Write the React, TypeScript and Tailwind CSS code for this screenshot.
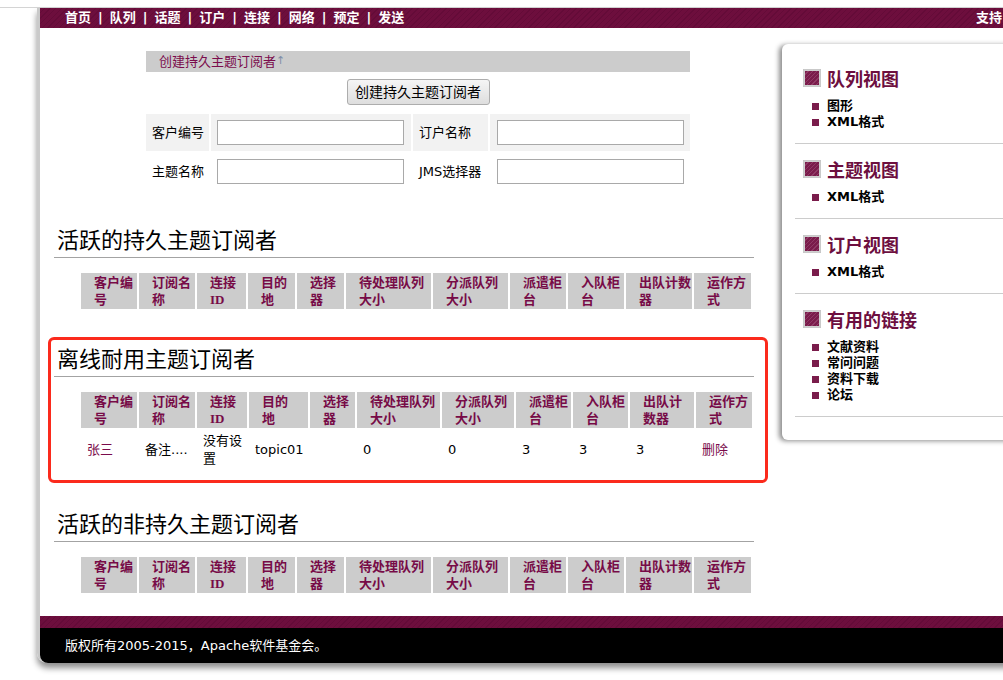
const sans = "font-['DejaVu_Sans','Noto_Sans_CJK_SC',sans-serif]";
const serif = "font-['Liberation_Serif','Noto_Sans_CJK_SC',serif]";

const stripe =
  "bg-[repeating-linear-gradient(135deg,#6d0e3d_0px,#6d0e3d_3px,#640b38_3px,#640b38_4px)]";

const navItems = ["首页", "队列", "话题", "订户", "连接", "网络", "预定", "发送"];

const head1 = [
  ["客户编", "号"],
  ["订阅名", "称"],
  ["连接", "ID"],
  ["目的", "地"],
  ["选择", "器"],
  ["待处理队列", "大小"],
  ["分派队列", "大小"],
  ["派遣柜", "台"],
  ["入队柜", "台"],
  ["出队计数", "器"],
  ["运作方", "式"],
];

const head2 = head1.map((h, i) => (i === 9 ? ["出队计", "数器"] : h));

const cols1 = "grid-cols-[56px_56px_49px_47px_47px_85px_75px_56px_56px_66px_57px]";
const cols2 = "grid-cols-[56px_56px_50px_59px_45px_83px_72px_55px_55px_64px_56px]";

const HeadRow = ({ labels, cols }: { labels: string[][]; cols: string }) => (
  <div className={`grid ${cols} gap-[2px]`}>
    {labels.map(([a, b], i) => (
      <div
        key={i}
        className={`h-[36px] bg-[#cccccc] pl-[13px] py-px text-[13px] leading-[17px] font-bold text-[#770b47] whitespace-nowrap ${serif}`}
      >
        {a}
        <br />
        {b}
      </div>
    ))}
  </div>
);

const SectionTitle = ({ children }: { children: React.ReactNode }) => (
  <h2
    className={`h-[30px] border-b border-[#a3a3a3] pl-[3px] pb-[3px] text-[22px] leading-[26px] text-black ${serif}`}
  >
    {children}
  </h2>
);

const Square = () => (
  <span className="w-[18px] h-[18px] shrink-0 bg-[#cfcfcf] p-[2px] shadow-[inset_0_0_1px_#999]">
    <span className="block w-full h-full bg-[repeating-linear-gradient(135deg,#7a1c4b_0px,#7a1c4b_2px,#8f3a65_2px,#8f3a65_3px)]" />
  </span>
);

const SideSection = ({ title, items }: { title: string; items: string[] }) => (
  <div>
    <div className="flex items-center gap-[6px] h-[24px] pl-[8px]">
      <Square />
      <span className="text-[18px] leading-[22px] font-bold text-[#6d0f3f] font-['Noto_Sans_CJK_SC',sans-serif]">
        {title}
      </span>
    </div>
    <ul className="mt-[8px] pl-[17px]">
      {items.map((t) => (
        <li key={t} className="flex items-center h-[16px] text-[13px] font-bold text-black">
          <span className="w-[7px] h-[7px] bg-[#7a1c4b] mr-[8px]" />
          {t}
        </li>
      ))}
    </ul>
    <div className="mt-[13px] h-px bg-[#cccccc]" />
  </div>
);

export default function App() {
  return (
    <div className={`relative w-[1003px] h-[680px] overflow-hidden bg-white ${sans}`}>
      <div className="h-[7px]" />
      <div className="h-px bg-[#d4d4d4]" />
      <div className="flex">
        <div className="w-[37px] shrink-0" />
        <div className="w-[1120px] shrink-0 border-l-[3px] border-[#c9c9c9] rounded-bl-[10px] shadow-[0_5px_6px_rgba(0,0,0,0.45)]">
          {/* top nav */}
          <div className={`h-[20px] ${stripe} flex items-center pl-[25px] text-white font-bold text-[13px]`}>
            <div className="w-[911px] shrink-0 flex items-center">
              {navItems.map((n, i) => (
                <span key={n} className="flex items-center">
                  {i > 0 && <span className="mx-[7px]">|</span>}
                  {n}
                </span>
              ))}
            </div>
            <div className="whitespace-nowrap">支持</div>
          </div>

          <div className="flex">
            {/* main column */}
            <div className="w-[742px] shrink-0 pt-[23px] pb-[23px]">
              <div className="ml-[106px] w-[544px]">
                <div className="h-[21px] bg-[#cccccc] pl-[13px] flex items-center text-[13px] text-[#7b0c4c]">
                  创建持久主题订阅者
                  <span className="text-[11px] text-[#7e8ea8]">↑</span>
                </div>
                <div className="mt-[7px] flex justify-center">
                  <button className="h-[26px] w-[143px] border border-[#adadad] rounded-[3px] bg-[linear-gradient(#f5f5f5,#dedede)] text-[14px] text-black">
                    创建持久主题订阅者
                  </button>
                </div>
                <div className="mt-[9px] grid grid-cols-[63px_200px_75px_200px] gap-[2px] text-[13px] text-black">
                  <div className="h-[37px] bg-[#f2f2f2] pl-[6px] flex items-center">客户编号</div>
                  <div className="h-[37px] bg-[#f2f2f2] pl-[6px] flex items-center">
                    <input className="w-[187px] h-[25px] border border-[#a9a9a9] bg-white" />
                  </div>
                  <div className="h-[37px] bg-[#f2f2f2] pl-[6px] flex items-center">订户名称</div>
                  <div className="h-[37px] bg-[#f2f2f2] pl-[7px] flex items-center">
                    <input className="w-[187px] h-[25px] border border-[#a9a9a9] bg-white" />
                  </div>
                  <div className="h-[37px] pl-[6px] flex items-center">主题名称</div>
                  <div className="h-[37px] pl-[6px] flex items-center">
                    <input className="w-[187px] h-[25px] border border-[#a9a9a9] bg-white" />
                  </div>
                  <div className="h-[37px] pl-[6px] flex items-center">JMS选择器</div>
                  <div className="h-[37px] pl-[7px] flex items-center">
                    <input className="w-[187px] h-[25px] border border-[#a9a9a9] bg-white" />
                  </div>
                </div>
              </div>

              <div className="ml-[14px] w-[700px]">
                <div className="mt-[38px]">
                  <SectionTitle>活跃的持久主题订阅者</SectionTitle>
                  <div className="mt-[15px] ml-[27px]">
                    <HeadRow labels={head1} cols={cols1} />
                  </div>
                </div>

                <div className="relative mt-[38px]">
                  <SectionTitle>离线耐用主题订阅者</SectionTitle>
                  <div className="mt-[15px] ml-[27px]">
                    <HeadRow labels={head2} cols={cols2} />
                    <div className={`mt-[2px] grid ${cols2} gap-[2px] text-[13px] leading-[18px] text-black`}>
                      {[
                        <span className="text-[#7b0c4c]">张三</span>,
                        "备注....",
                        <span>
                          没有设
                          <br />置
                        </span>,
                        "topic01",
                        "",
                        "0",
                        "0",
                        "3",
                        "3",
                        "3",
                        <span className="text-[#7b0c4c]">删除</span>,
                      ].map((c, i) => (
                        <div key={i} className="h-[40px] pl-[6px] flex items-center whitespace-nowrap">
                          {c}
                        </div>
                      ))}
                    </div>
                  </div>
                  <div className="absolute -left-[6px] -top-[10px] -right-[14px] -bottom-[13px] border-[3px] border-[#fb2a1c] rounded-[6px] pointer-events-none" />
                </div>

                <div className="mt-[42px]">
                  <SectionTitle>活跃的非持久主题订阅者</SectionTitle>
                  <div className="mt-[15px] ml-[27px]">
                    <HeadRow labels={head1} cols={cols1} />
                  </div>
                </div>
              </div>
            </div>

            {/* sidebar */}
            <div className="mt-[16px] self-start w-[320px] shrink-0 bg-white rounded-l-[6px] shadow-[-3px_1px_5px_rgba(0,0,0,0.45)] pt-[22px] pb-[23px] pl-[13px] flex flex-col gap-[13px]">
              <SideSection title="队列视图" items={["图形", "XML格式"]} />
              <SideSection title="主题视图" items={["XML格式"]} />
              <SideSection title="订户视图" items={["XML格式"]} />
              <SideSection title="有用的链接" items={["文献资料", "常问问题", "资料下载", "论坛"]} />
            </div>
          </div>

          {/* footer */}
          <div className={`h-[12px] ${stripe}`} />
          <div className="h-[35px] bg-black rounded-bl-[8px] pl-[25px] flex items-center text-[13px] text-white">
            版权所有2005-2015，Apache软件基金会。
          </div>
        </div>
      </div>
    </div>
  );
}
